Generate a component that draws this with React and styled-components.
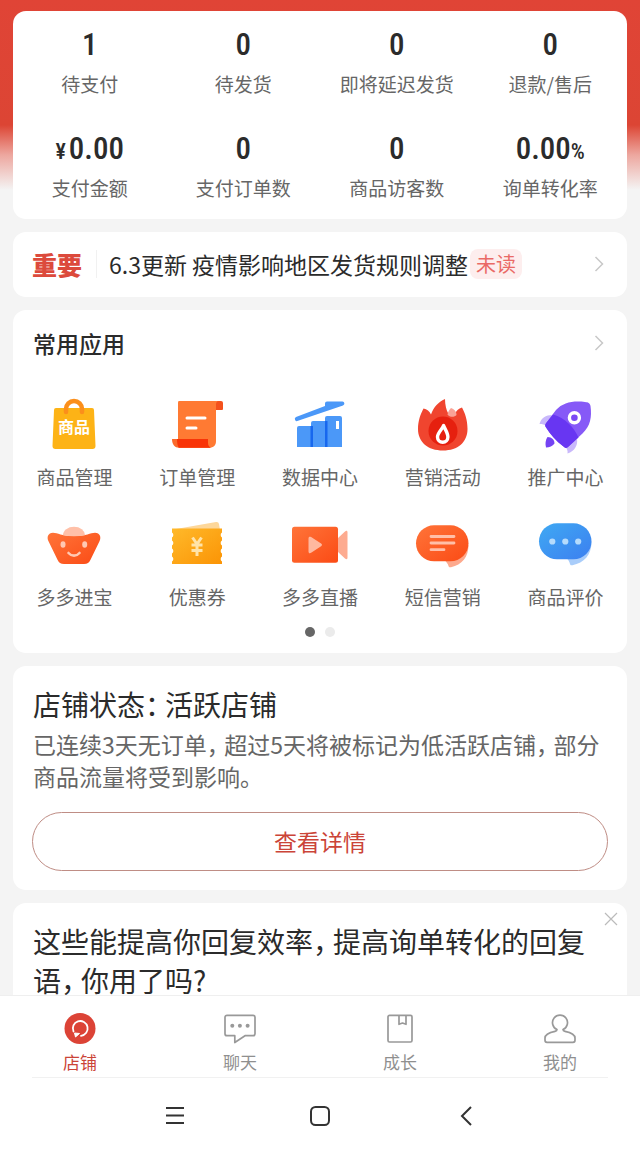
import React from "react";
import styled, { createGlobalStyle } from "styled-components";

const stats = [
  { value: "1", label: "待支付" },
  { value: "0", label: "待发货" },
  { value: "0", label: "即将延迟发货" },
  { value: "0", label: "退款/售后" },
  { prefix: "¥", value: "0.00", label: "支付金额" },
  { value: "0", label: "支付订单数" },
  { value: "0", label: "商品访客数" },
  { value: "0.00", suffix: "%", label: "询单转化率" },
];

/* app icons, all on a 56x56 grid */
const GoodsIcon = () => (
  <svg width="56" height="56" viewBox="0 0 56 56">
    <path d="M10 10h36a2 2 0 0 1 2 2l1.500 36a3 3 0 0 1-3 3h-37a3 3 0 0 1-3-3L8 12a2 2 0 0 1 2-2z" fill="#fdb316" />
    <path d="M20 14v-3a8 8 0 0 1 16 0v3" fill="none" stroke="#fb8f1b" strokeWidth="4.500" strokeLinecap="round" />
    <text x="28" y="35" textAnchor="middle" fontSize="16" fontWeight="700" fill="#fff">商品</text>
  </svg>
);

const OrderIcon = () => (
  <svg width="56" height="56" viewBox="0 0 56 56">
    <path d="M46 3h6a2 2 0 0 1 2 2v6a1 1 0 0 1-1 1h-7z" fill="#f4511c" />
    <path d="M10 3h40c-2.500 0-3 2-3 4v36c0 4-2 6.500-6 6.500H9V6c0-2 0-3 1-3z" fill="#ff7a33" />
    <path d="M3 41h36v4c0 2.500 1 4 3 4.700H10c-4 0-7-3-7-8.700z" fill="#fb6a2c" />
    <path d="M8 41h31v4c0 2.500 1 4 3 4.700H10C8.500 48 8 45 8 41z" fill="#f93407" />
    <path d="M18 20h18M18 30h9" stroke="#fff" strokeWidth="3" strokeLinecap="round" />
  </svg>
);

const DataIcon = () => (
  <svg width="56" height="56" viewBox="0 0 56 56">
    <path d="M4 19 33 8V5.500a2 2 0 0 1 2-2h15.500a2 2 0 0 1 .5 3.900L6 22.800a2 2 0 0 1-2-3.800z" fill="#4b98f8" />
    <path d="M5 30a2 2 0 0 1 2-2h14v21H5zM19 25a2 2 0 0 1 2-2h14v26H19zM33 20a2 2 0 0 1 2-2h13a2 2 0 0 1 2 2v29H33z" fill="#4b98f8" />
    <path d="M18.500 28h2.500v21h-2.500zM33 23h2.500v26H33z" fill="#1767ee" />
    <path d="M44 23h3v8h-3z" fill="#fff" />
  </svg>
);

const FireIcon = () => (
  <svg width="56" height="56" viewBox="0 0 56 56">
    <path d="M28 52.500C13 52.500 3 44 3 31c0-8 2.500-15 5.500-20.500 3.500.5 6 2.500 7.500 6 2.500-7 7-12.500 14-15.500 0 6 1.500 11 3 14 1.500 3 6 3.500 7.500 0 1-2.500 3-4.500 6.500-5.500C50 15 52.500 22 52.500 31c0 13-9.500 21.500-24.500 21.500z" fill="#f0452f" />
    <circle cx="28" cy="33" r="14.500" fill="#e6200f" />
    <path d="M36 10c3 1 5.500 3.500 5.500 7-2 2.500-7 2.500-9-.5.5-3 2-5 3.500-6.500z" fill="#f9a397" />
    <path d="M28.500 27.500c-.5 3-6 7-6 11.500a5.200 5.200 0 0 0 10.400 0c0-4-3-8-4.400-11.500z" fill="none" stroke="#fff" strokeWidth="3.400" strokeLinejoin="round" />
  </svg>
);

const RocketIcon = () => (
  <svg width="56" height="56" viewBox="0 0 56 56">
    <path d="M14 17C8 17 3 20 1.500 26c3 0 5 .5 7 2zM39 41c1 6-2 12-9.500 14.500.5-3-.5-5-2.500-7z" fill="#c9b8fb" />
    <path d="M47 4c3 .3 5 1 5.500 4 1.500 11 0 20-8 27.500L30 49c-2 1.500-3 1-4.500-.5C18 43 12.500 36.500 7.700 29c-.8-1.500-.5-2.500.5-4L18 12C25 4.500 35 2.500 47 4z" fill="#8659f7" />
    <path d="M15 16.500C27 20 36 29 40.500 39.500L30 49c-2 1.500-3 1-4.500-.5C18 43 12.500 36.500 7.700 29c-.8-1.500-.5-2.500.5-4z" fill="#6836f2" />
    <circle cx="36.400" cy="19.700" r="5" fill="#7a49f4" stroke="#fff" strokeWidth="3.400" />
    <path d="M9.500 39c4.500 0 7 3 7 6.500-2 2.500-5 4-8.500 4-1-4-.5-7.500 1.500-10.500z" fill="#7443f3" />
  </svg>
);

const IngotIcon = () => (
  <svg width="56" height="56" viewBox="0 0 56 56">
    <defs>
      <linearGradient id="orange" x1="0" y1="0" x2="1" y2="1">
        <stop offset="0" stopColor="#ff7439" />
        <stop offset="1" stopColor="#fb4b15" />
      </linearGradient>
    </defs>
    <path d="M7 14.700c5 0 8 3.300 21 3.300s16-3.300 21-3.300c5 0 6.500 4.500 4.500 8.500l-9 18.500c-1.500 3-3 4.300-6.500 4.300H18c-3.500 0-5-1.300-6.500-4.300l-9-18.500C.5 19.200 2 14.700 7 14.700z" fill="url(#orange)" />
    <path d="M17 17.200a11 8.500 0 0 1 22 0c-7 1.500-15 1.500-22 0z" fill="#ffc0a8" />
    <ellipse cx="17" cy="26.500" rx="2.500" ry="3.200" fill="#ffc8b2" />
    <ellipse cx="38.700" cy="26.500" rx="2.500" ry="3.200" fill="#ffc8b2" />
    <path d="M22.500 35c3 3.500 8 3.500 11 0" fill="none" stroke="#ffc8b2" strokeWidth="2.600" strokeLinecap="round" />
  </svg>
);

const CouponIcon = () => (
  <svg width="56" height="56" viewBox="0 0 56 56">
    <defs>
      <linearGradient id="amber" x1="0" y1="0" x2="1" y2="1">
        <stop offset="0" stopColor="#ffb92a" />
        <stop offset="1" stopColor="#fb9405" />
      </linearGradient>
    </defs>
    <path d="M7 11 47 4q2.500-.5 3 2l1 6z" fill="#fdd79a" />
    <path d="M3 10.500h50v4a3 3 0 0 0 0 5v3a3 3 0 0 0 0 5v3a3 3 0 0 0 0 5v3a3 3 0 0 0 0 5V46H3v-2.500a3 3 0 0 0 0-5v-3a3 3 0 0 0 0-5v-3a3 3 0 0 0 0-5v-3a3 3 0 0 0 0-5z" fill="url(#amber)" />
    <path d="M23.500 19.500 28 26l4.500-6.500M28 26v12M22.500 27h11M22.500 32.500h11" fill="none" stroke="#ffe3a8" strokeWidth="3" />
  </svg>
);

const LiveIcon = () => (
  <svg width="56" height="56" viewBox="0 0 56 56">
    <path d="M45 21l8-7.500c1.500-1.200 2.500-.8 2.500 1v25c0 1.800-1 2.200-2.500 1L45 33z" fill="#fdab90" />
    <rect x="0" y="8.700" width="46" height="36" rx="2.500" fill="url(#orange)" />
    <path d="M16.500 20.500c0-1.800 1.200-2.300 2.600-1.400l10 6.400c1.200.8 1.200 1.900 0 2.700l-10 6.600c-1.400.9-2.600.3-2.600-1.400z" fill="#ffb89f" />
  </svg>
);

const SmsIcon = () => (
  <svg width="56" height="56" viewBox="0 0 56 56">
    <path d="M29 42c2 1 4 4 4.500 6 .3 1.200 1 1.500 2.500 1.200C47 47 53.500 39 53.500 27z" fill="#fda98d" />
    <rect x="1" y="7.300" width="52.500" height="36" rx="18" fill="url(#orange)" />
    <path d="M16 18.500h23M16 25h23M16 31.700h13" stroke="#ffbfa8" strokeWidth="2.800" strokeLinecap="round" />
  </svg>
);

const ReviewIcon = () => (
  <svg width="56" height="56" viewBox="0 0 56 56">
    <defs>
      <linearGradient id="sky" x1="0" y1="0" x2="1" y2="1">
        <stop offset="0" stopColor="#3fa9f3" />
        <stop offset="1" stopColor="#3c7ff0" />
      </linearGradient>
    </defs>
    <path d="M28 40c2 1 3.500 3.500 4 6 .3 1.200 1 1.500 2.500 1.200C46 45 53.500 37 53.500 24z" fill="#a9cdfa" />
    <rect x="1" y="5.300" width="52.500" height="36" rx="18" fill="url(#sky)" />
    <g fill="#b5dbfc">
      <circle cx="14.300" cy="23.500" r="3.100" />
      <circle cx="27.300" cy="23.500" r="3.100" />
      <circle cx="40.200" cy="23.500" r="3.100" />
    </g>
  </svg>
);

const apps = [
  { icon: GoodsIcon, label: "商品管理" },
  { icon: OrderIcon, label: "订单管理" },
  { icon: DataIcon, label: "数据中心" },
  { icon: FireIcon, label: "营销活动" },
  { icon: RocketIcon, label: "推广中心" },
  { icon: IngotIcon, label: "多多进宝" },
  { icon: CouponIcon, label: "优惠券" },
  { icon: LiveIcon, label: "多多直播" },
  { icon: SmsIcon, label: "短信营销" },
  { icon: ReviewIcon, label: "商品评价" },
];

const ShopIcon = () => (
  <svg width="32" height="32" viewBox="0 0 32 32">
    <circle cx="16" cy="15.500" r="15.500" fill="#dc4336" />
    <path d="M17 22.800A7.400 7.400 0 1 0 9.500 18.500" fill="none" stroke="#fff" strokeWidth="1.800" strokeLinecap="round" />
    <path d="M10.500 20 15.500 20.500 11.500 24z" fill="#fff" stroke="#fff" strokeLinejoin="round" />
  </svg>
);

const ChatIcon = () => (
  <svg width="32" height="32" viewBox="0 0 32 32" fill="none" stroke="#999" strokeWidth="1.700" strokeLinejoin="round">
    <path d="M3 2.300h26a2 2 0 0 1 2 2v16.400a2 2 0 0 1-2 2h-8L10.800 29.500v-6.800H3a2 2 0 0 1-2-2V4.300a2 2 0 0 1 2-2z" />
    <g fill="#999" stroke="none">
      <circle cx="8.300" cy="12.800" r="2" />
      <circle cx="15.900" cy="12.800" r="2" />
      <circle cx="23.600" cy="12.800" r="2" />
    </g>
  </svg>
);

const BookIcon = () => (
  <svg width="32" height="32" viewBox="0 0 32 32" fill="none" stroke="#999" strokeWidth="1.700" strokeLinejoin="round">
    <rect x="4" y="2.300" width="24" height="26.700" rx="1.500" />
    <path d="M15 2.300v9l3.500-1.300 3.500 1.300v-9" />
  </svg>
);

const UserIcon = () => (
  <svg width="32" height="32" viewBox="0 0 32 32" fill="none" stroke="#999" strokeWidth="1.700" strokeLinejoin="round" strokeLinecap="round">
    <path d="M13 16.500a7.500 7.500 0 1 1 6 0c0 1 .8 1.600 2 1.800 6 1.200 10 3 10 6.700v2.300a2 2 0 0 1-2 2H3a2 2 0 0 1-2-2V25c0-3.700 4-5.500 10-6.700 1.200-.2 2-.8 2-1.800z" />
  </svg>
);

const tabs = [
  { icon: ShopIcon, label: "店铺", active: true },
  { icon: ChatIcon, label: "聊天" },
  { icon: BookIcon, label: "成长" },
  { icon: UserIcon, label: "我的" },
];

const Arrow = () => (
  <svg width="10" height="16" viewBox="0 0 10 16" fill="none" stroke="#c8c8c8" strokeWidth="1.500">
    <path d="M1.500 1 8.500 8l-7 7" />
  </svg>
);

const App = () => {
  return (
    <Page>
      <GlobalStyle />
      <Content>
        {/* order and sales numbers */}
        <Card>
          <StatGrid>
            {stats.map((item) => (
              <Stat key={item.label}>
                <StatValue>
                  {item.prefix && <Unit $front>{item.prefix}</Unit>}
                  {item.value}
                  {item.suffix && <Unit>{item.suffix}</Unit>}
                </StatValue>
                <Label>{item.label}</Label>
              </Stat>
            ))}
          </StatGrid>
        </Card>

        {/* notice */}
        <Notice href="#notice">
          <NoticeTag>重要</NoticeTag>
          <NoticeText>6.3更新 疫情影响地区发货规则调整</NoticeText>
          <Unread>未读</Unread>
          <Arrow />
        </Notice>

        {/* app shortcuts */}
        <Card>
          <CardHead>
            <h2>常用应用</h2>
            <ArrowLink href="#apps" aria-label="全部应用">
              <Arrow />
            </ArrowLink>
          </CardHead>
          <AppGrid>
            {apps.map(({ icon: Icon, label }) => (
              <AppLink href="#app" key={label}>
                <Icon />
                <Label>{label}</Label>
              </AppLink>
            ))}
          </AppGrid>
          <Dots>
            <Dot $active />
            <Dot />
          </Dots>
        </Card>

        {/* shop state */}
        <StatusCard>
          <Title>
            店铺状态<Mark>：</Mark>活跃店铺
          </Title>
          <Text>
            已连续3天无订单<Mark>，</Mark>超过5天将被标记为低活跃店铺<Mark>，</Mark>部分商品流量将受到影响。
          </Text>
          <DetailButton type="button">查看详情</DetailButton>
        </StatusCard>

        <TipCard>
          <Title>
            这些能提高你回复效率<Mark>，</Mark>提高询单转化的回复语<Mark>，</Mark>你用了吗?
          </Title>
          <CloseButton type="button" aria-label="关闭">
            <svg width="14" height="14" viewBox="0 0 14 14" stroke="#bbb" strokeWidth="1.200">
              <path d="M1 1l12 12M13 1 1 13" />
            </svg>
          </CloseButton>
        </TipCard>
      </Content>

      <TabBar>
        {tabs.map(({ icon: Icon, label, active }) => (
          <Tab href="#tab" key={label} $active={active}>
            <Icon />
            <span>{label}</span>
          </Tab>
        ))}
      </TabBar>

      <SystemBar>
        <SystemButton type="button" aria-label="菜单">
          <svg width="20" height="20" viewBox="0 0 20 20" stroke="#333" strokeWidth="1.800">
            <path d="M1 2h18M1 9.500h18M1 17h18" />
          </svg>
        </SystemButton>
        <SystemButton type="button" aria-label="主页">
          <svg width="20" height="20" viewBox="0 0 20 20" fill="none" stroke="#333" strokeWidth="2">
            <rect x="1" y="1" width="18" height="18" rx="4.500" />
          </svg>
        </SystemButton>
        <SystemButton type="button" aria-label="返回">
          <svg width="20" height="20" viewBox="0 0 20 20" fill="none" stroke="#333" strokeWidth="2">
            <path d="M16 1 7 10l9 9" />
          </svg>
        </SystemButton>
      </SystemBar>
    </Page>
  );
};

const GlobalStyle = createGlobalStyle`
  * {
    box-sizing: border-box;
    margin: 0;
    padding: 0;
  }

  body {
    font-family: "Noto Sans CJK SC", sans-serif;
    color: #2b2b2b;
    background: #f4f4f4;
  }

  a {
    color: inherit;
    text-decoration: none;
  }

  button {
    font-family: inherit;
    background: none;
    border: none;
    cursor: pointer;
  }

  svg {
    display: block;
    flex: none;
  }
`;

const Page = styled.div`
  display: flex;
  flex-direction: column;
  height: 100vh;
`;

const Content = styled.main`
  flex: 1;
  min-height: 0;
  overflow-y: auto;
  scrollbar-width: none;
  display: flex;
  flex-direction: column;
  gap: 13px;
  padding: 11px 13px 0;
  background: linear-gradient(#e04436 0, #dc4534 125px, #eda79f 155px, #f4f4f4 190px);
`;

const Card = styled.section`
  flex: none;
  background: #fff;
  border-radius: 13px;
`;

const StatGrid = styled.div`
  display: grid;
  grid-template-columns: repeat(4, 1fr);
  row-gap: 33px;
  padding: 16px 0 17px;
`;

const Stat = styled.div`
  display: flex;
  flex-direction: column;
  align-items: center;
  gap: 7px;
`;

const StatValue = styled.strong`
  display: flex;
  align-items: baseline;
  height: 36px;
  font-family: "Roboto Condensed", Roboto, sans-serif;
  font-size: 31px;
  font-weight: 500;
  line-height: 36px;
`;

const Unit = styled.small`
  font-size: 22px;
  margin-right: ${({ $front }) => ($front ? "3px" : "0")};
`;

const Label = styled.span`
  font-size: 19px;
  line-height: 28px;
  color: #666;
  white-space: nowrap;
`;

const Notice = styled.a`
  flex: none;
  display: flex;
  align-items: center;
  height: 65px;
  padding: 0 23px 2px 19px;
  background: #fff;
  border-radius: 13px;

  svg {
    margin-left: auto;
  }
`;

const NoticeTag = styled.strong`
  font-size: 25px;
  font-weight: 900;
  line-height: 28px;
  color: #dc4a3c;
  padding-right: 14px;
  border-right: 1px solid #f1f1f1;
`;

const NoticeText = styled.span`
  font-size: 23px;
  line-height: 28px;
  padding: 0 2px 0 12px;
  white-space: nowrap;
`;

const Unread = styled.span`
  font-size: 20px;
  line-height: 30px;
  padding: 0 6px;
  color: #ea6a66;
  background: #fdeeee;
  border-radius: 8px;
`;

const CardHead = styled.div`
  display: flex;
  align-items: center;
  justify-content: space-between;
  padding: 19px 23px 41px 20px;

  h2 {
    font-size: 23px;
    font-weight: 500;
    line-height: 28px;
  }
`;

const ArrowLink = styled.a`
  display: block;
`;

const AppGrid = styled.nav`
  display: grid;
  grid-template-columns: repeat(5, 1fr);
  row-gap: 27px;
`;

const AppLink = styled.a`
  display: flex;
  flex-direction: column;
  align-items: center;
  gap: 9px;
`;

const Dots = styled.div`
  display: flex;
  justify-content: center;
  gap: 10px;
  padding: 16px 0;
`;

const Dot = styled.i`
  width: 10px;
  height: 10px;
  border-radius: 50%;
  background: ${({ $active }) => ($active ? "#666" : "#ebebeb")};
`;

const StatusCard = styled(Card)`
  display: flex;
  flex-direction: column;
  padding: 19px;
`;

const Title = styled.h2`
  font-size: 28px;
  font-weight: 400;
  line-height: 39px;
  padding-left: 1px;
`;

const Text = styled.p`
  font-size: 23px;
  line-height: 32px;
  color: #666;
  padding: 4px 0 0 1px;
`;

/* half-width punctuation with a short pause after it */
const Mark = styled.span`
  font-feature-settings: "halt";
  margin-right: 6px;
`;

const DetailButton = styled.button`
  height: 59px;
  margin-top: 20px;
  padding-bottom: 2px;
  font-size: 23px;
  color: #cb4438;
  border: 1px solid #bf8d85;
  border-radius: 30px;
`;

const TipCard = styled(Card)`
  position: relative;
  padding: 19px;
`;

const CloseButton = styled.button`
  position: absolute;
  top: 9px;
  right: 9px;
`;

const TabBar = styled.nav`
  flex: none;
  display: grid;
  grid-template-columns: repeat(4, 1fr);
  padding: 17px 0 3px;
  background: #fff;
  border-top: 1px solid #efefef;
`;

const Tab = styled.a`
  display: flex;
  flex-direction: column;
  align-items: center;
  gap: 5px;
  font-size: 17px;
  line-height: 24px;
  color: ${({ $active }) => ($active ? "#cb4438" : "#8f8f8f")};
`;

const SystemBar = styled.div`
  flex: none;
  display: grid;
  grid-template-columns: repeat(3, 1fr);
  height: 77px;
  padding: 0 16%;
  background: linear-gradient(#f1f1f1, #f1f1f1) center top / 90% 1px no-repeat #fff;
`;

const SystemButton = styled.button`
  display: flex;
  align-items: center;
  justify-content: center;
`;

export default App;
